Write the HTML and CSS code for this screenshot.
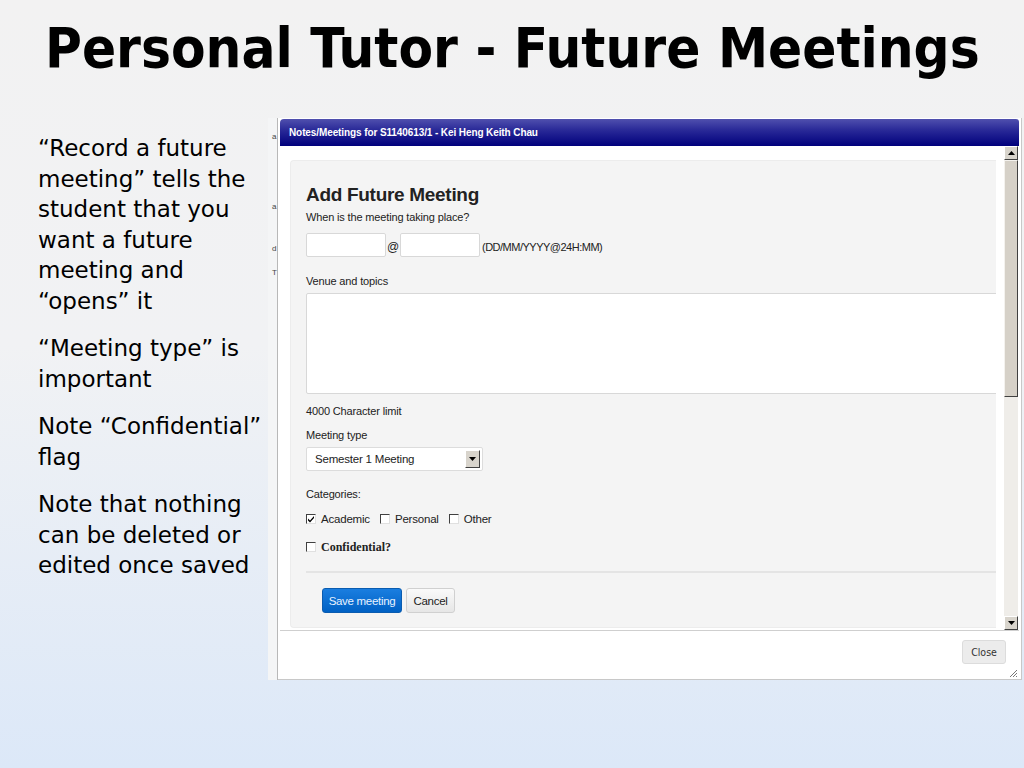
FILE: index.html
```html
<!DOCTYPE html>
<html lang="en">
<head>
  <meta charset="UTF-8" />
  <meta name="viewport" content="width=device-width, initial-scale=1.0"/>
  <title>Personal Tutor - Future Meetings</title>
  <link rel="stylesheet" href="styles.css">
</head>
<body>

  <div class="slide">
    <h1 class="slide-title">Personal Tutor - Future Meetings</h1>

    <div class="slide-body">
      <div class="notes">
        <p>“Record a future<br>meeting” tells the<br>student that you<br>want a future<br>meeting and<br>“opens” it</p>
        <p>“Meeting type” is<br>important</p>
        <p>Note “Confidential”<br>flag</p>
        <p>Note that nothing<br>can be deleted or<br>edited once saved</p>
      </div>

      <div class="shot">
        <div class="shot-edge">
          <span class="frag f1">a</span>
          <span class="frag f2">a</span>
          <span class="frag f3">d</span>
          <span class="frag f4">T</span>
        </div>

        <div class="dialog">
          <div class="dialog-titlebar">Notes/Meetings for S1140613/1 - Kei Heng Keith Chau</div>

          <div class="dialog-content">
            <div class="scroll-area">
              <div class="fieldset">
                <h3>Add Future Meeting</h3>
                <div class="label first">When is the meeting taking place?</div>
                <div class="date-row">
                  <input type="text" class="field short" />
                  <span class="at">@</span>
                  <input type="text" class="field short" />
                  <span class="hint">(DD/MM/YYYY@24H:MM)</span>
                </div>

                <div class="label venue">Venue and topics</div>
                <div class="textarea"></div>

                <div class="label limit">4000 Character limit</div>
                <div class="label type">Meeting type</div>
                <div class="select">
                  <span>Semester 1 Meeting</span>
                  <span class="select-btn">
                    <svg width="7" height="4" viewBox="0 0 7 4"><path d="M0 0h7L3.5 4z" fill="#000"/></svg>
                  </span>
                </div>

                <div class="label cats">Categories:</div>
                <div class="check-row">
                  <label class="check"><span class="box checked">
                    <svg width="8" height="8" viewBox="0 0 8 8"><path d="M1 3.5l2 2 4-4.5v2l-4 4.5-2-2z" fill="#000"/></svg>
                  </span>Academic</label>
                  <label class="check"><span class="box"></span>Personal</label>
                  <label class="check"><span class="box"></span>Other</label>
                </div>
                <div class="check-row conf">
                  <label class="check bold"><span class="box"></span>Confidential?</label>
                </div>

                <div class="rule"></div>

                <div class="buttons">
                  <button class="btn-save">Save meeting</button>
                  <button class="btn-cancel">Cancel</button>
                </div>
              </div>
            </div>

            <div class="scrollbar">
              <div class="sb-arrow">
                <svg width="7" height="4" viewBox="0 0 7 4"><path d="M3.5 0L7 4H0z" fill="#000"/></svg>
              </div>
              <div class="sb-thumb"></div>
              <div class="sb-track"></div>
              <div class="sb-arrow">
                <svg width="7" height="4" viewBox="0 0 7 4"><path d="M0 0h7L3.5 4z" fill="#000"/></svg>
              </div>
            </div>
          </div>

          <div class="dialog-footer">
            <button class="btn-close">Close</button>
            <svg class="grip" width="10" height="10" viewBox="0 0 10 10">
              <path d="M9 2L2 9M9 5L5 9M9 8L8 9" stroke="#777" stroke-width="1"/>
            </svg>
          </div>
        </div>
      </div>
    </div>
  </div>

</body>
</html>
```

FILE: styles.css
```css
body {
  margin: 0;
  padding: 0;
  background: linear-gradient(#f2f2f2 0%, #f1f2f4 45%, #dce8f8 100%);
  height: 768px;
  overflow: hidden;
}

.slide {
  width: 1024px;
  height: 768px;
}

.slide-title {
  margin: 0;
  height: 112px;
  padding-left: 45px;
  line-height: 96px;
  font-family: "Comic Sans MS", "DejaVu Sans Condensed", "DejaVu Sans", sans-serif;
  font-stretch: condensed;
  font-size: 56px;
  font-weight: bold;
  color: #000;
  white-space: nowrap;
}

.slide-body {
  display: flex;
  margin-top: 6px;
}

.notes {
  width: 230px;
  padding: 15px 0 0 38px;
  font-family: "DejaVu Sans", sans-serif;
  font-size: 23px;
  line-height: 30.5px;
  color: #000;
}

.notes p {
  margin: 0 0 17px 0;
}

/* screenshot of the dialog */
.shot {
  display: flex;
  height: 562px;
}

.shot-edge {
  position: relative;
  width: 9px;
  background: #f4f5f6;
  border-right: 1px solid #b8b8b8;
}

.frag {
  position: absolute;
  left: 4px;
  font-family: "Liberation Sans", sans-serif;
  font-size: 8px;
  color: #444;
}

.f1 { top: 14px; }
.f2 { top: 84px; }
.f3 { top: 126px; }
.f4 { top: 150px; }

.dialog {
  width: 739px;
  padding: 1px 2px 0 2px;
  background: #fff;
  border-right: 1px solid #c8c8c8;
  border-bottom: 1px solid #c8c8c8;
  display: flex;
  flex-direction: column;
  font-family: "Liberation Sans", Arial, sans-serif;
}

.dialog-titlebar {
  height: 27px;
  line-height: 27px;
  padding-left: 9px;
  border-radius: 4px 3px 0 0;
  background: linear-gradient(#5050ae 0%, #2a2a98 40%, #00007c 100%);
  color: #fff;
  font-size: 10px;
  font-weight: bold;
  letter-spacing: -0.1px;
}

.dialog-content {
  display: flex;
  height: 486px;
}

.scroll-area {
  flex: 1;
  min-width: 0;
  overflow: hidden;
  padding: 14px 8px 0 10px;
}

.fieldset {
  height: 443px;
  padding: 23px 0 0 15px;
  background: #f4f4f4;
  border: 1px solid #ececec;
  border-right: none;
  border-radius: 4px 0 0 4px;
  overflow: hidden;
  font-size: 11px;
  color: #222;
}

.fieldset h3 {
  margin: 0;
  height: 22px;
  line-height: 22px;
  font-size: 19px;
  font-weight: bold;
  color: #222;
  letter-spacing: -0.3px;
}

.label {
  height: 16px;
  line-height: 16px;
  letter-spacing: -0.15px;
}

.label.first { margin-top: 3px; }
.label.venue { margin-top: 16px; }
.label.limit { margin-top: 9px; }
.label.type { margin-top: 8px; }
.label.cats { margin-top: 15px; }

.date-row {
  display: flex;
  align-items: center;
  margin-top: 8px;
  height: 24px;
}

.field {
  box-sizing: border-box;
  height: 24px;
  border: 1px solid #d8d8d8;
  border-radius: 2px;
  background: #fff;
  margin: 0;
}

.field.short {
  width: 80px;
}

.at {
  width: 14px;
  text-align: center;
  font-size: 12px;
  padding-top: 3px;
}

.hint {
  margin-left: 2px;
  padding-top: 3px;
  font-size: 11px;
  letter-spacing: -0.5px;
}

.textarea {
  width: 740px;
  height: 99px;
  margin-top: 4px;
  background: #fff;
  border: 1px solid #d8d8d8;
  border-radius: 2px;
}

.select {
  box-sizing: border-box;
  display: flex;
  align-items: center;
  justify-content: space-between;
  width: 177px;
  height: 24px;
  margin-top: 4px;
  padding: 0 2px 0 8px;
  background: #fff;
  border: 1px solid #dcdcdc;
  border-radius: 2px;
  font-size: 11.5px;
  letter-spacing: -0.2px;
}

.select-btn {
  box-sizing: border-box;
  display: flex;
  align-items: center;
  justify-content: center;
  width: 15px;
  height: 18px;
  background: #d8d4cc;
  border: 1px solid;
  border-color: #fff #404040 #404040 #fff;
}

.check-row {
  display: flex;
  align-items: center;
  height: 16px;
  margin-top: 9px;
}

.check-row.conf {
  margin-top: 12px;
}

.check {
  display: flex;
  align-items: center;
  margin-right: 10px;
  font-size: 11.5px;
  letter-spacing: -0.2px;
}

.check.bold {
  font-family: "Liberation Serif", "Times New Roman", serif;
  font-weight: bold;
  font-size: 12px;
  letter-spacing: 0;
}

.box {
  box-sizing: border-box;
  display: flex;
  align-items: center;
  justify-content: center;
  width: 10px;
  height: 10px;
  margin-right: 5px;
  background: #fff;
  border: 1px solid;
  border-color: #404040 #e0e0e0 #e0e0e0 #404040;
}

.rule {
  height: 2px;
  margin-top: 16px;
  background: #e4e4e4;
}

.buttons {
  display: flex;
  margin: 15px 0 0 16px;
}

.buttons button {
  height: 25px;
  font-family: "Liberation Sans", Arial, sans-serif;
  font-size: 11.5px;
  letter-spacing: -0.3px;
  border-radius: 3px;
  padding: 0;
  cursor: pointer;
}

.btn-save {
  width: 80px;
  margin-right: 4px;
  color: #e8f2ff;
  background: linear-gradient(#1a7ee0, #0061c4);
  border: 1px solid #0a5cb0;
}

.btn-cancel {
  width: 49px;
  color: #222;
  background: linear-gradient(#fafafa, #e6e6e6);
  border: 1px solid #d0d0d0;
}

/* classic scrollbar */
.scrollbar {
  width: 14px;
  margin-right: 1px;
  display: flex;
  flex-direction: column;
  background: #f0eeea;
}

.sb-arrow {
  box-sizing: border-box;
  display: flex;
  align-items: center;
  justify-content: center;
  height: 14px;
  background: #d8d4cc;
  border: 1px solid;
  border-color: #fff #404040 #404040 #fff;
}

.sb-thumb {
  box-sizing: border-box;
  height: 237px;
  background: #d6d1c8;
  border: 1px solid;
  border-color: #f4f2ee #404040 #404040 #f4f2ee;
}

.sb-track {
  flex: 1;
  background: #efede9;
}

.dialog-footer {
  position: relative;
  display: flex;
  justify-content: flex-end;
  align-items: flex-start;
  height: 48px;
  border-top: 1px solid #cfcfcf;
  background: #fff;
}

.btn-close {
  margin: 9px 13px 0 0;
  width: 44px;
  height: 24px;
  padding: 0;
  font-family: "DejaVu Sans Condensed", "DejaVu Sans", sans-serif;
  font-size: 10.5px;
  color: #333;
  background: #ececec;
  border: 1px solid #dcdcdc;
  border-radius: 3px;
}

.grip {
  position: absolute;
  right: 1px;
  bottom: 1px;
}
```
